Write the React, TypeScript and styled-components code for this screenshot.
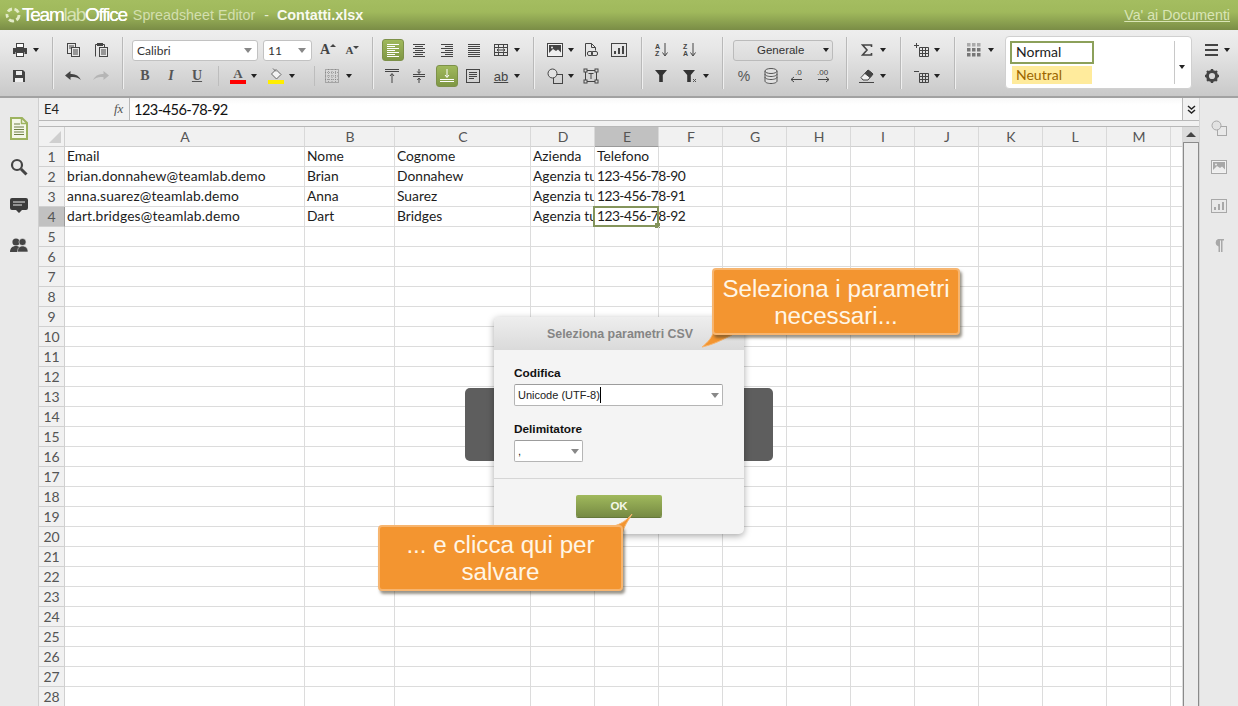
import React from 'react';
import styled, { createGlobalStyle } from 'styled-components';

const GlobalStyle = createGlobalStyle`
  html, body { margin: 0; padding: 0; width: 1238px; height: 706px; overflow: hidden; background: #fff; }
  * { box-sizing: border-box; }
`;

const CELL_FONT = `Lato, "Open Sans", sans-serif`;
const UI_FONT = `"Liberation Sans", Arial, sans-serif`;

const Page = styled.div`
  position: relative;
  width: 1238px;
  height: 706px;
  overflow: hidden;
  display: flex;
  flex-direction: column;
  font-family: ${UI_FONT};
`;

/* title bar */
const TitleBar = styled.div`
  height: 30px;
  flex: none;
  display: flex;
  align-items: center;
  padding: 0 8px 0 5px;
  background: linear-gradient(#a4bd60, #a0b95c 40%, #7a8d46);
`;

const Brand = styled.div`
  margin-left: 1px;
  font-size: 19px;
  letter-spacing: -1.25px;
  color: #fff;
  text-shadow: 0 0 0.5px #fff;
`;

const BrandLight = styled.span`
  color: #d6e2b2;
  text-shadow: none;
`;

const AppName = styled.div`
  margin-left: 6px;
  font-size: 14.3px;
  color: #d3dfae;
`;

const Dash = styled.div`
  margin: 0 8px 0 9px;
  font-size: 14px;
  color: #e6edcf;
`;

const FileName = styled.div`
  font-size: 14.4px;
  font-weight: 700;
  color: #f8faf0;
`;

const DocsLink = styled.a`
  margin-left: auto;
  font-size: 14.2px;
  color: #d9e5b6;
  text-decoration: underline;
`;

/* toolbar */
const Toolbar = styled.div`
  height: 68px;
  flex: none;
  display: flex;
  padding-top: 7px;
  background: linear-gradient(#eeeeee, #e6e6e6 30%, #c9c9c9);
  border-bottom: 2px solid #a2a2a2;
`;

const Group = styled.div<{ $w: number; $pad: number; $plain?: boolean }>`
  width: ${(p) => p.$w}px;
  height: 52px;
  flex: none;
  padding-left: ${(p) => p.$pad}px;
  border-right: ${(p) => (p.$plain ? 'none' : '1px solid #b9b9b9')};
  box-shadow: ${(p) => (p.$plain ? 'none' : '1px 0 0 #efefef')};
`;

const Row = styled.div`
  height: 26px;
  display: flex;
  align-items: center;
`;

const Slot = styled.div<{ $w: number }>`
  width: ${(p) => p.$w}px;
  height: 24px;
  flex: none;
  display: flex;
  align-items: center;
  justify-content: center;
  color: #444;
`;

const Gap = styled.div<{ $w: number }>`
  width: ${(p) => p.$w}px;
  flex: none;
`;

const ActiveButton = styled.div`
  width: 22px;
  height: 22px;
  flex: none;
  display: flex;
  align-items: center;
  justify-content: center;
  color: #fff;
  border: 1px solid #7d9149;
  border-radius: 3px;
  background: linear-gradient(#a0b95c, #7f9745);
`;

const Arrow = styled.i<{ $color?: string }>`
  display: block;
  width: 0;
  height: 0;
  border-left: 3.5px solid transparent;
  border-right: 3.5px solid transparent;
  border-top: 4px solid ${(p) => p.$color || '#222'};
`;

const Combo = styled.div<{ $w: number; $center?: boolean }>`
  width: ${(p) => p.$w}px;
  height: 21px;
  flex: none;
  display: flex;
  align-items: center;
  padding: 0 5px 0 4px;
  font-family: ${CELL_FONT};
  font-size: 12px;
  color: #333;
  background: #fff;
  border: 1px solid #c2c2c2;
  border-radius: 3px;
  justify-content: space-between;
`;

const FormatCombo = styled(Combo)`
  background: linear-gradient(#e6e6e6, #dcdcdc);
  border-color: #bbb;
  padding: 0 3px 0 23px;
  font-size: 11.5px;
  font-family: ${UI_FONT};
`;

const FontText = styled.span`
  font-family: ${CELL_FONT};
`;

const GreyArrow = styled(Arrow)`
  border-top-color: #888;
  border-left-width: 4px;
  border-right-width: 4px;
  border-top-width: 5px;
`;

const Sep = styled.div<{ $ml: number; $mr: number }>`
  width: 1px;
  height: 20px;
  flex: none;
  margin-left: ${(p) => p.$ml}px;
  margin-right: ${(p) => p.$mr}px;
  background: #bdbdbd;
`;

const SizeGlyph = styled.span<{ $big?: boolean }>`
  position: relative;
  font-family: "Liberation Serif", serif;
  font-weight: 700;
  font-size: ${(p) => (p.$big ? 14 : 11)}px;
  color: #444;
  padding-right: 6px;

  &::after {
    content: '';
    position: absolute;
    right: 0;
    top: 2px;
    border-left: 3px solid transparent;
    border-right: 3px solid transparent;
    ${(p) => (p.$big ? 'border-bottom: 3px solid #444;' : 'border-top: 3px solid #444;')}
  }
`;

const StyleGlyph = styled.span<{ $italic?: boolean; $under?: boolean }>`
  font-family: "Liberation Serif", serif;
  font-weight: 700;
  font-size: 14px;
  color: #555;
  font-style: ${(p) => (p.$italic ? 'italic' : 'normal')};
  text-decoration: ${(p) => (p.$under ? 'underline' : 'none')};
`;

const ColorGlyph = styled.div<{ $bar: string }>`
  width: 16px;
  display: flex;
  flex-direction: column;
  align-items: center;
  font-family: "Liberation Serif", serif;
  font-weight: 700;
  font-size: 13px;
  line-height: 12px;
  color: #555;

  &::after {
    content: '';
    display: block;
    width: 16px;
    height: 4px;
    background: ${(p) => p.$bar};
  }
`;

const AbGlyph = styled.span`
  font-family: ${UI_FONT};
  font-size: 13px;
  color: #444;
  text-decoration: underline;
`;

const Percent = styled.span`
  font-family: ${UI_FONT};
  font-size: 14px;
  color: #555;
`;

const Gallery = styled.div`
  width: 187px;
  height: 53px;
  flex: none;
  margin-top: -1px;
  display: flex;
  background: #fff;
  border: 1px solid #d0d0d0;
  border-radius: 4px;
  padding: 4px 0 0 4px;
`;

const GalleryItems = styled.div`
  width: 165px;
  height: 43px;
  flex: none;
  border-right: 1px solid #c8c8c8;
`;

const NormalStyle = styled.div`
  width: 84px;
  height: 23px;
  display: flex;
  align-items: center;
  padding: 0 0 2px 4px;
  font-family: ${CELL_FONT};
  font-size: 14px;
  color: #222;
  border: 2.5px solid #8ca05a;
`;

const NeutralStyle = styled.div`
  width: 80px;
  height: 18px;
  margin: 2px 0 0 2px;
  padding: 0 0 2px 4px;
  display: flex;
  align-items: center;
  font-family: ${CELL_FONT};
  font-size: 14px;
  color: #9c6500;
  background: #ffeb9c;
`;

const GalleryMore = styled.div`
  flex: 1;
  display: flex;
  align-items: center;
  justify-content: center;
  padding-right: 2px;
  padding-top: 4px;
`;

/* main area */
const Main = styled.div`
  flex: 1;
  min-height: 0;
  display: flex;
`;

const LeftRail = styled.div`
  width: 39px;
  flex: none;
  display: flex;
  flex-direction: column;
  align-items: center;
  padding-top: 19px;
  gap: 17px;
  background: #e9e9e9;
  border-right: 1px solid #cfcfcf;
`;

const RailIcon = styled.div`
  width: 22px;
  height: 22px;
  display: flex;
  align-items: center;
  justify-content: center;
`;

const RightRail = styled.div`
  width: 39px;
  flex: none;
  display: flex;
  flex-direction: column;
  align-items: center;
  padding-top: 19px;
  gap: 17px;
  background: #e9e9e9;
  border-left: 1px solid #d4d4d4;
`;

const Center = styled.div`
  flex: 1;
  min-width: 0;
  display: flex;
  flex-direction: column;
`;

const FormulaBar = styled.div`
  height: 23px;
  flex: none;
  display: flex;
  background: #f1f1f1;
  border-bottom: 1px solid #b8b8b8;
`;

const NameBox = styled.div`
  width: 75px;
  padding-left: 5px;
  display: flex;
  align-items: center;
  font-family: ${CELL_FONT};
  font-size: 13px;
  color: #222;
`;

const FxLabel = styled.div`
  width: 15px;
  display: flex;
  align-items: center;
  font-family: "Liberation Serif", serif;
  font-style: italic;
  font-size: 13px;
  color: #555;
`;

const FormulaInput = styled.div`
  flex: 1;
  padding-left: 4px;
  display: flex;
  align-items: center;
  font-family: ${CELL_FONT};
  font-size: 14.6px;
  letter-spacing: -0.55px;
  color: #111;
  background: linear-gradient(#f8f8f8, #fff 30%);
  border-left: 1px solid #b8b8b8;
  border-right: 1px solid #b8b8b8;
`;

const ExpandButton = styled.div`
  width: 16px;
  display: flex;
  align-items: center;
  justify-content: center;
`;

const Strip = styled.div`
  height: 6px;
  flex: none;
  background: #f1f1f1;
  border-bottom: 1px solid #b8b8b8;
`;

const SheetArea = styled.div`
  flex: 1;
  min-height: 0;
  display: flex;
`;

const Sheet = styled.div`
  flex: 1;
  min-width: 0;
  overflow: hidden;
`;

const SheetRow = styled.div`
  height: 20px;
  display: flex;
`;

const Corner = styled.div`
  width: 26px;
  height: 20px;
  flex: none;
  background: #f1f1f1;
  border-right: 1px solid #d0d0d0;
  border-bottom: 1px solid #d0d0d0;
  display: flex;
  align-items: flex-end;
  justify-content: flex-end;
  padding: 0 3px 3px 0;
`;

const CornerMark = styled.i`
  display: block;
  width: 0;
  height: 0;
  border-left: 12px solid transparent;
  border-bottom: 12px solid #cfcfcf;
`;

const ColHead = styled.div<{ $w: number; $active?: boolean }>`
  width: ${(p) => p.$w}px;
  flex: none;
  display: flex;
  align-items: center;
  justify-content: center;
  padding-left: 1px;
  font-family: ${CELL_FONT};
  font-size: 14px;
  color: #555;
  background: ${(p) => (p.$active ? '#c1c1c1' : '#f1f1f1')};
  border-right: 1px solid #d9d9d9;
  border-bottom: 1px solid ${(p) => (p.$active ? '#9a9a9a' : '#d0d0d0')};
`;

const RowHead = styled.div<{ $active?: boolean }>`
  width: 26px;
  flex: none;
  display: flex;
  align-items: center;
  justify-content: center;
  padding-bottom: 1px;
  font-family: ${CELL_FONT};
  font-size: 14px;
  color: #555;
  background: ${(p) => (p.$active ? '#c1c1c1' : '#f1f1f1')};
  border-right: 1px solid ${(p) => (p.$active ? '#9a9a9a' : '#d0d0d0')};
  border-bottom: 1px solid #d0d0d0;
`;

const Cell = styled.div<{ $w: number; $clip?: boolean; $track: number }>`
  position: relative;
  width: ${(p) => p.$w}px;
  flex: none;
  padding-left: 2px;
  white-space: nowrap;
  overflow: ${(p) => (p.$clip ? 'hidden' : 'visible')};
  font-family: ${CELL_FONT};
  font-size: 13.8px;
  letter-spacing: ${(p) => p.$track}px;
  line-height: 18px;
  color: #1c1c1c;
  border-right: 1px solid #dcdcdc;
  border-bottom: 1px solid #dcdcdc;
`;

const Selection = styled.div`
  position: absolute;
  left: -2px;
  top: -1px;
  width: 66px;
  height: 21px;
  border: 2px solid #84945b;

  &::after {
    content: '';
    position: absolute;
    right: -3px;
    bottom: -3px;
    width: 5px;
    height: 5px;
    background: #84945b;
  }
`;

const Scrollbar = styled.div`
  width: 16px;
  flex: none;
  display: flex;
  flex-direction: column;
  background: #ececec;
`;

const ScrollUp = styled.div`
  height: 15px;
  flex: none;
  display: flex;
  align-items: center;
  justify-content: center;
  background: #dcdcdc;
`;

const UpArrow = styled.i`
  display: block;
  width: 0;
  height: 0;
  border-left: 5px solid transparent;
  border-right: 5px solid transparent;
  border-bottom: 5px solid #444;
`;

const ScrollThumb = styled.div`
  flex: 1;
  background: #ececec;
  border: 1px solid #8a8a8a;
  border-bottom: none;
  border-radius: 1px 1px 0 0;
`;

/* dialog and callouts lie over the sheet */
const LoadingBox = styled.div`
  position: absolute;
  left: 465px;
  top: 388px;
  width: 308px;
  height: 73px;
  background: #5e5e5e;
  border-radius: 5px;
`;

const Dialog = styled.div`
  position: absolute;
  left: 494px;
  top: 317px;
  width: 250px;
  height: 217px;
  display: flex;
  flex-direction: column;
  background: #f4f4f4;
  border-radius: 5px;
  box-shadow: 0 2px 7px rgba(0, 0, 0, 0.35);
`;

const DialogTitle = styled.div`
  height: 33px;
  flex: none;
  display: flex;
  align-items: center;
  justify-content: center;
  padding-left: 2px;
  font-size: 12.4px;
  font-weight: 700;
  color: #858585;
  background: linear-gradient(#eeeeee, #dadada);
  border-radius: 5px 5px 0 0;
`;

const DialogBody = styled.div`
  flex: 1;
  padding: 16px 20px 0;
  border-bottom: 1px solid #d6d6d6;
`;

const FieldLabel = styled.div`
  height: 18px;
  font-size: 11.8px;
  font-weight: 700;
  line-height: 15px;
  color: #111;
`;

const DialogSelect = styled.div<{ $w: number }>`
  width: ${(p) => p.$w}px;
  height: 22px;
  margin-bottom: 16px;
  display: flex;
  align-items: center;
  padding-left: 3px;
  font-size: 11px;
  color: #222;
  background: #fff;
  border: 1px solid #b5b5b5;
  border-top-color: #9c9c9c;
  border-radius: 2px;
`;

const TextCaret = styled.i`
  display: block;
  width: 1px;
  height: 16px;
  background: #000;
`;

const SelectArrow = styled.div`
  width: 15px;
  margin-left: auto;
  display: flex;
  justify-content: center;
  padding-left: 1px;
`;

const DialogFooter = styled.div`
  height: 56px;
  flex: none;
  display: flex;
  justify-content: center;
  padding: 16px 0 0 0;
`;

const OkButton = styled.div`
  width: 86px;
  height: 22px;
  display: flex;
  align-items: center;
  justify-content: center;
  font-size: 11.5px;
  font-weight: 700;
  color: #f4f7e8;
  background: linear-gradient(#a0b95c, #768a43);
  border-radius: 2px;
  box-shadow: 0 1px 0 #65783a;
`;

const Callout = styled.div`
  position: absolute;
  display: flex;
  align-items: center;
  justify-content: center;
  text-align: center;
  font-size: 24.2px;
  line-height: 27px;
  color: #fff6e6;
  background: #f39530;
  border: 2px solid #f7b56f;
  border-radius: 4px;
  box-shadow: 2px 3px 3px rgba(70, 60, 40, 0.55);
`;

const TopCallout = styled(Callout)`
  left: 712px;
  top: 268px;
  width: 248px;
  height: 67px;
`;

const BottomCallout = styled(Callout)`
  left: 378px;
  top: 525px;
  width: 245px;
  height: 66px;
`;

const Tail = styled.svg`
  position: absolute;
  overflow: visible;
`;

const TopTail = styled(Tail)`
  left: 698px;
  top: 312px;
  width: 36px;
  height: 38px;
`;

const BottomTail = styled(Tail)`
  left: 606px;
  top: 512px;
  width: 30px;
  height: 34px;
`;

/* icons */
const Svg = ({ w = 16, h = 16, children }: { w?: number; h?: number; children: React.ReactNode }) => (
  <svg width={w} height={h} viewBox={`0 0 ${w} ${h}`} fill="none" stroke="currentColor" strokeWidth="1">
    {children}
  </svg>
);

const Lines = ({ rows }: { rows: [number, number, number][] }) => (
  <Svg>
    {rows.map(([a, b, y], i) => (
      <path key={i} d={`M${a} ${y}.5H${b}`} />
    ))}
  </Svg>
);

const AlignLeft = () => <Lines rows={[[2, 14, 2], [2, 10, 4], [2, 14, 6], [2, 10, 8], [2, 14, 10], [2, 10, 12], [2, 14, 14]]} />;
const AlignCenter = () => <Lines rows={[[2, 14, 2], [4, 12, 4], [2, 14, 6], [4, 12, 8], [2, 14, 10], [4, 12, 12], [2, 14, 14]]} />;
const AlignRight = () => <Lines rows={[[2, 14, 2], [6, 14, 4], [2, 14, 6], [6, 14, 8], [2, 14, 10], [6, 14, 12], [2, 14, 14]]} />;
const AlignJustify = () => <Lines rows={[[2, 14, 2], [2, 14, 4], [2, 14, 6], [2, 14, 8], [2, 14, 10], [2, 14, 12], [2, 14, 14]]} />;

const Merge = () => (
  <Svg>
    <rect x="1.5" y="2.5" width="13" height="11" />
    <path d="M1 5.5h14M1 10.5h14M5.5 3v2M10.5 3v2M5.5 11v2M10.5 11v2M4 8h8M4 8l2-1.5M4 8l2 1.5M12 8l-2-1.5M12 8l-2 1.5" />
  </Svg>
);

const Printer = () => (
  <Svg>
    <rect x="4.5" y="1.5" width="7" height="4" fill="#fff" />
    <path d="M1 6h14v6h-2.500v-2h-9v2H1z" fill="currentColor" stroke="none" />
    <rect x="4.5" y="10.5" width="7" height="4" fill="#fff" />
  </Svg>
);

const Floppy = () => (
  <Svg>
    <path d="M2 2h10l2 2v10H2z" fill="currentColor" stroke="none" />
    <rect x="5" y="3" width="6" height="4" fill="#eee" stroke="none" />
    <rect x="4" y="10" width="8" height="4" fill="#eee" stroke="none" />
  </Svg>
);

const Copy = () => (
  <Svg>
    <rect x="2.5" y="1.5" width="8" height="10" fill="#e8e8e8" />
    <rect x="6.5" y="5.5" width="8" height="9" fill="#e8e8e8" />
    <path d="M8 8h5M8 10h5M8 12h5M4 4h5M4 6h2" />
  </Svg>
);

const Paste = () => (
  <Svg>
    <path d="M2.5 14.5v-12h9v3" />
    <rect x="4" y="1" width="6" height="3" fill="currentColor" stroke="none" />
    <rect x="6.5" y="5.5" width="8" height="9" fill="#e8e8e8" />
    <path d="M8 8h5M8 10h5M8 12h5" />
  </Svg>
);

const Undo = ({ mirror, color }: { mirror?: boolean; color: string }) => (
  <svg width="16" height="10" viewBox="0 0 16 10">
    <path
      transform={mirror ? 'translate(16 0) scale(-1 1)' : undefined}
      d="M0 4.500L5.500 0v3C10 2.500 14 4.500 16 9 13 6.500 9.500 5.500 5.500 6.300V9z"
      fill={color}
    />
  </svg>
);

const Borders = () => (
  <svg width="14" height="14" viewBox="0 0 14 14" fill="none" stroke="#777" strokeDasharray="1 1">
    <rect x="0.5" y="0.5" width="13" height="13" />
    <path d="M7 0v14M0 7h14M3.500 0v14M10.500 0v14M0 3.500h14M0 10.500h14" opacity="0.6" />
  </svg>
);

const Bucket = () => (
  <svg width="16" height="16" viewBox="0 0 16 16" fill="none">
    <path d="M8 1.500l5 5-4.500 4.500-5-5z" stroke="#666" fill="#f2f2f2" />
    <path d="M5 0.500L8 3.500" stroke="#666" />
    <rect x="0" y="12" width="16" height="4" fill="#ffee00" />
  </svg>
);

const ValignTop = () => (
  <Svg>
    <path d="M1 1.500h14M1 3.500h14M8 15V6M6 8l2-2.500L10 8" />
  </Svg>
);

const ValignMid = () => (
  <Svg>
    <path d="M2 6.500h12M2 8.500h12M8 1v4M6.300 3.500L8 5.500l1.700-2M8 15v-5M6.300 12L8 10l1.700 2" />
  </Svg>
);

const ValignBottom = () => (
  <Svg>
    <path d="M1 11.500h14M1 13.500h14M8 1v8M6 7l2 2.500L10 7" />
  </Svg>
);

const WrapText = () => (
  <Svg>
    <rect x="1.5" y="1.5" width="13" height="13" />
    <path d="M4 4.500h8M4 6.500h8M4 8.500h8M4 10.500h5" />
  </Svg>
);

const ImageIcon = ({ color = '#444' }: { color?: string }) => (
  <svg width="16" height="14" viewBox="0 0 16 14" fill="none">
    <rect x="0.5" y="0.5" width="15" height="13" stroke={color} fill="#f2f2f2" />
    <rect x="2" y="2" width="12" height="10" fill={color} />
    <path d="M2 10l4-4 3 2 2-1.500 3 3V12H2z" fill="#eee" />
    <circle cx="5" cy="4.500" r="1" fill="#eee" />
  </svg>
);

const DocLink = () => (
  <Svg>
    <path d="M2.500 14.500v-13h6l4 4v3" />
    <path d="M8.500 1.500v4h4" />
    <rect x="4.500" y="9.500" width="5" height="4" rx="1.500" />
    <rect x="8.500" y="9.500" width="6" height="4" rx="1.500" />
  </Svg>
);

const Chart = ({ color = '#444' }: { color?: string }) => (
  <svg width="16" height="14" viewBox="0 0 16 14" fill="none">
    <rect x="0.5" y="0.5" width="15" height="13" stroke={color} />
    <path d="M3 8h2v3H3zM7 5h2v6H7zM11 3h2v8h-2z" fill={color} />
  </svg>
);

const Shapes = ({ color = '#444' }: { color?: string }) => (
  <svg width="16" height="16" viewBox="0 0 16 16" fill="none" stroke={color}>
    <rect x="6.500" y="6.500" width="9" height="9" />
    <circle cx="5.500" cy="5.500" r="4.500" fill="#e2e2e2" />
  </svg>
);

const TextBox = () => (
  <Svg>
    <rect x="2.500" y="2.500" width="11" height="11" />
    <rect x="1" y="1" width="3" height="3" fill="#ddd" />
    <rect x="12" y="1" width="3" height="3" fill="#ddd" />
    <rect x="1" y="12" width="3" height="3" fill="#ddd" />
    <rect x="12" y="12" width="3" height="3" fill="#ddd" />
    <path d="M5.500 5.500h5M8 5.500v5.500" />
  </Svg>
);

const Sort = ({ top, bottom }: { top: string; bottom: string }) => (
  <svg width="16" height="16" viewBox="0 0 16 16" fill="none">
    <text x="1" y="7" fontSize="7" fontWeight="700" fontFamily="Liberation Sans" fill="#444">{top}</text>
    <text x="1" y="14" fontSize="7" fontWeight="700" fontFamily="Liberation Sans" fill="#444">{bottom}</text>
    <path d="M11 1v12M8.500 10.500L11 14l2.500-3.500" stroke="#444" />
  </svg>
);

const Filter = ({ clear }: { clear?: boolean }) => (
  <svg width="16" height="14" viewBox="0 0 16 14">
    <path d="M1 1h12L8.800 6v7H5.200V6z" fill="#333" />
    {clear && <path d="M11 10l3 3M14 10l-3 3" stroke="#555" fill="none" />}
  </svg>
);

const Database = () => (
  <svg width="14" height="16" viewBox="0 0 14 16" fill="#e0e0e0" stroke="#555">
    <path d="M1 3v10c0 1.500 2.700 2.500 6 2.500s6-1 6-2.500V3" />
    <ellipse cx="7" cy="3" rx="6" ry="2.500" />
    <path d="M1 6c0 1.500 2.700 2.500 6 2.500S13 7.500 13 6M1 9c0 1.500 2.700 2.500 6 2.500S13 10.500 13 9" fill="none" />
  </svg>
);

const Decimal = ({ left, label }: { left?: boolean; label: string }) => (
  <svg width="14" height="16" viewBox="0 0 14 16" fill="none">
    <text x={left ? 5 : 0} y="7" fontSize="8" fontFamily="Liberation Sans" fill="#444">{label}</text>
    <path d={left ? 'M12 11.500H1M4 9L1 11.500 4 14' : 'M1 11.500h11M9 9l3 2.500L9 14'} stroke="#444" />
  </svg>
);

const Sigma = () => (
  <svg width="12" height="12" viewBox="0 0 12 12" fill="none" stroke="#444" strokeWidth="1.600">
    <path d="M10.500 3V1H1.500L6 6l-4.500 5h9V9" />
  </svg>
);

const Eraser = () => (
  <svg width="16" height="14" viewBox="0 0 16 14" fill="none" stroke="#444">
    <path d="M9 1l5 4-5 6H4L2 8.500z" fill="#f2f2f2" />
    <path d="M9 1l5 4-3 3.500-5-4z" fill="#444" />
    <path d="M0 13.500h15" />
  </svg>
);

const TableEdit = ({ sign }: { sign: string }) => (
  <svg width="16" height="14" viewBox="0 0 16 14" fill="none" stroke="#444">
    <path d={sign} />
    <path d="M5.500 4.500h9v9h-9zM8.500 4v10M11.500 4v10M5 7.500h10M5 10.500h10" />
  </svg>
);

const Dots = () => (
  <svg width="14" height="14" viewBox="0 0 14 14" fill="#777">
    {[0, 5, 10].map((y) =>
      [0, 5, 10].map((x) => (
        <rect key={`${x}-${y}`} x={x} y={y} width="3.500" height="3.500" opacity={y === 0 ? 0.55 : 1} />
      ))
    )}
  </svg>
);

const Menu = () => (
  <svg width="13" height="12" viewBox="0 0 13 12" fill="#444">
    <rect y="0" width="13" height="2" />
    <rect y="5" width="13" height="2" />
    <rect y="10" width="13" height="2" />
  </svg>
);

const Gear = () => (
  <svg width="14" height="14" viewBox="0 0 14 14">
    <circle cx="7" cy="7" r="4.600" fill="none" stroke="#444" strokeWidth="3" />
    <path d="M7 0v14M0 7h14M2 2l10 10M12 2L2 12" stroke="#444" strokeWidth="2.400" strokeDasharray="2.400 9.200" />
  </svg>
);

const Logo = () => (
  <svg width="16" height="16" viewBox="0 0 16 16" fill="none" stroke="#e3ebc8" strokeWidth="2.800">
    <path d="M3 4.500A6 6 0 0 1 7 2M9.500 2.200A6 6 0 0 1 13.400 5.500M14 8a6 6 0 0 1-2.600 5M9 13.900A6 6 0 0 1 4 12.500M2.700 10.500A6 6 0 0 1 2 7" />
  </svg>
);

const DocRail = () => (
  <svg width="18" height="23" viewBox="0 0 18 23" fill="none">
    <path d="M1 1h11l5 5v16H1z" fill="#f4f7e8" stroke="#9db35f" strokeWidth="2" />
    <path d="M11.500 1v5.500H17" stroke="#9db35f" strokeWidth="1.500" />
    <path d="M4 7h6M4 10h10M4 12.500h10M4 15h10M4 17.500h10" stroke="#6f7f45" />
  </svg>
);

const SearchRail = () => (
  <svg width="18" height="18" viewBox="0 0 18 18" fill="none" stroke="#444">
    <circle cx="7" cy="7" r="5" strokeWidth="2.200" />
    <path d="M11 11l5.500 5.500" strokeWidth="3" />
  </svg>
);

const ChatRail = () => (
  <svg width="18" height="16" viewBox="0 0 18 16">
    <path d="M2 0h14a2 2 0 0 1 2 2v8a2 2 0 0 1-2 2h-4l-3 3-3-3H2a2 2 0 0 1-2-2V2a2 2 0 0 1 2-2z" fill="#3c3c3c" />
    <path d="M3 4h12M3 7h9" stroke="#e9e9e9" fill="none" />
  </svg>
);

const PeopleRail = () => (
  <svg width="18" height="14" viewBox="0 0 18 14" fill="#444">
    <circle cx="6" cy="4" r="3.600" />
    <path d="M0 14c0-4 2.500-6 6-6s4.500 2 4.500 6z" />
    <circle cx="12.500" cy="4" r="3.600" stroke="#e9e9e9" strokeWidth="0.600" />
    <path d="M7.500 14c0-4 2-6 5-6s5.500 2 5.500 6z" stroke="#e9e9e9" strokeWidth="0.600" />
  </svg>
);

const Pilcrow = () => (
  <svg width="10" height="13" viewBox="0 0 10 13" fill="#a8a8a8">
    <path d="M4 0h6v1.500H8.500V13H7V1.500H6V13H4.500V7.500A4 4 0 0 1 4 0z" />
  </svg>
);

const Expand = () => (
  <svg width="9" height="9" viewBox="0 0 9 9" fill="none" stroke="#222" strokeWidth="1.500">
    <path d="M1 1l3.500 3L8 1M1 5l3.500 3L8 5" />
  </svg>
);

const COLUMNS: [string, number][] = [
  ['A', 240], ['B', 90], ['C', 136], ['D', 64], ['E', 64], ['F', 64], ['G', 64],
  ['H', 64], ['I', 64], ['J', 64], ['K', 64], ['L', 64], ['M', 64], ['', 12],
];

const DATA: string[][] = [
  ['Email', 'Nome', 'Cognome', 'Azienda', 'Telefono'],
  ['brian.donnahew@teamlab.demo', 'Brian', 'Donnahew', 'Agenzia turistica', '123-456-78-90'],
  ['anna.suarez@teamlab.demo', 'Anna', 'Suarez', 'Agenzia turistica', '123-456-78-91'],
  ['dart.bridges@teamlab.demo', 'Dart', 'Bridges', 'Agenzia turistica', '123-456-78-92'],
];

const ROWS = Array.from({ length: 28 }, (_, i) => i);

// Lato's digits and @ differ from Calibri's, so those values get their own tracking
const trackingFor = (value?: string) => {
  if (!value) return 0;
  if (/^\d/.test(value)) return -0.55;
  return value.includes('@') ? 0.15 : 0;
};

export default function App() {
  return (
    <Page>
      <GlobalStyle />
      <TitleBar>
        <Logo />
        <Brand>
          Team<BrandLight>lab</BrandLight>Office
        </Brand>
        <AppName>Spreadsheet Editor</AppName>
        <Dash>-</Dash>
        <FileName>Contatti.xlsx</FileName>
        <DocsLink>Va' ai Documenti</DocsLink>
      </TitleBar>

      <Toolbar>
        <Group $w={53} $pad={9}>
          <Row>
            <Slot $w={21}><Printer /></Slot>
            <Slot $w={11}><Arrow /></Slot>
          </Row>
          <Row>
            <Slot $w={20}><Floppy /></Slot>
          </Row>
        </Group>
        <Group $w={70} $pad={6}>
          <Row>
            <Slot $w={28}><Copy /></Slot>
            <Slot $w={28}><Paste /></Slot>
          </Row>
          <Row>
            <Slot $w={28}><Undo color="#444" /></Slot>
            <Slot $w={28}><Undo mirror color="#b5b5b5" /></Slot>
          </Row>
        </Group>
        <Group $w={250} $pad={9}>
          <Row>
            <Combo $w={126}>
              <FontText>Calibri</FontText>
              <GreyArrow />
            </Combo>
            <Gap $w={5} />
            <Combo $w={49}>
              <FontText>11</FontText>
              <GreyArrow />
            </Combo>
            <Slot $w={32}><SizeGlyph $big>A</SizeGlyph></Slot>
            <Slot $w={17}><SizeGlyph>A</SizeGlyph></Slot>
          </Row>
          <Row>
            <Slot $w={26}><StyleGlyph>B</StyleGlyph></Slot>
            <Slot $w={26}><StyleGlyph $italic>I</StyleGlyph></Slot>
            <Slot $w={26}><StyleGlyph $under>U</StyleGlyph></Slot>
            <Sep $ml={8} $mr={8} />
            <Slot $w={22}><ColorGlyph $bar="#ff0000">A</ColorGlyph></Slot>
            <Slot $w={10}><Arrow /></Slot>
            <Gap $w={6} />
            <Slot $w={22}><Bucket /></Slot>
            <Slot $w={10}><Arrow /></Slot>
            <Sep $ml={17} $mr={7} />
            <Slot $w={20}><Borders /></Slot>
            <Gap $w={2} />
            <Slot $w={10}><Arrow /></Slot>
          </Row>
        </Group>
        <Group $w={161} $pad={9}>
          <Row>
            <ActiveButton><AlignLeft /></ActiveButton>
            <Gap $w={1} />
            <Slot $w={28}><AlignCenter /></Slot>
            <Slot $w={27}><AlignRight /></Slot>
            <Slot $w={27}><AlignJustify /></Slot>
            <Slot $w={27}><Merge /></Slot>
            <Slot $w={6}><Arrow /></Slot>
          </Row>
          <Row>
            <Slot $w={20}><ValignTop /></Slot>
            <Slot $w={34}><ValignMid /></Slot>
            <ActiveButton><ValignBottom /></ActiveButton>
            <Slot $w={30}><WrapText /></Slot>
            <Slot $w={26}><AbGlyph>ab</AbGlyph></Slot>
            <Slot $w={6}><Arrow /></Slot>
          </Row>
        </Group>
        <Group $w={108} $pad={10}>
          <Row>
            <Slot $w={22}><ImageIcon /></Slot>
            <Slot $w={10}><Arrow /></Slot>
            <Slot $w={30}><DocLink /></Slot>
            <Slot $w={26}><Chart /></Slot>
          </Row>
          <Row>
            <Slot $w={22}><Shapes /></Slot>
            <Slot $w={10}><Arrow /></Slot>
            <Slot $w={30}><TextBox /></Slot>
          </Row>
        </Group>
        <Group $w={81} $pad={6}>
          <Row>
            <Slot $w={28}><Sort top="A" bottom="Z" /></Slot>
            <Slot $w={27}><Sort top="Z" bottom="A" /></Slot>
          </Row>
          <Row>
            <Slot $w={28}><Filter /></Slot>
            <Slot $w={27}><Filter clear /></Slot>
            <Slot $w={6}><Arrow /></Slot>
          </Row>
        </Group>
        <Group $w={124} $pad={10}>
          <Row>
            <FormatCombo $w={100}>
              <span>Generale</span>
              <Arrow />
            </FormatCombo>
          </Row>
          <Row>
            <Slot $w={22}><Percent>%</Percent></Slot>
            <Slot $w={32}><Database /></Slot>
            <Slot $w={20}><Decimal left label=".0" /></Slot>
            <Slot $w={34}><Decimal label=".00" /></Slot>
          </Row>
        </Group>
        <Group $w={54} $pad={8}>
          <Row>
            <Slot $w={23}><Sigma /></Slot>
            <Slot $w={10}><Arrow /></Slot>
          </Row>
          <Row>
            <Slot $w={23}><Eraser /></Slot>
            <Slot $w={10}><Arrow /></Slot>
          </Row>
        </Group>
        <Group $w={54} $pad={8}>
          <Row>
            <Slot $w={25}><TableEdit sign="M0 2.500h5M2.500 0v5" /></Slot>
            <Slot $w={6}><Arrow /></Slot>
          </Row>
          <Row>
            <Slot $w={25}><TableEdit sign="M0 2.500h5" /></Slot>
            <Slot $w={6}><Arrow /></Slot>
          </Row>
        </Group>
        <Group $w={50} $pad={8} $plain>
          <Row>
            <Slot $w={22}><Dots /></Slot>
            <Slot $w={12}><Arrow /></Slot>
          </Row>
        </Group>
        <Gallery>
          <GalleryItems>
            <NormalStyle>Normal</NormalStyle>
            <NeutralStyle>Neutral</NeutralStyle>
          </GalleryItems>
          <GalleryMore><Arrow /></GalleryMore>
        </Gallery>
        <Group $w={46} $pad={8} $plain>
          <Row>
            <Slot $w={23}><Menu /></Slot>
            <Slot $w={8}><Arrow /></Slot>
          </Row>
          <Row>
            <Slot $w={23}><Gear /></Slot>
          </Row>
        </Group>
      </Toolbar>

      <Main>
        <LeftRail>
          <RailIcon><DocRail /></RailIcon>
          <RailIcon><SearchRail /></RailIcon>
          <RailIcon><ChatRail /></RailIcon>
          <RailIcon><PeopleRail /></RailIcon>
        </LeftRail>
        <Center>
          <FormulaBar>
            <NameBox>E4</NameBox>
            <FxLabel>fx</FxLabel>
            <FormulaInput>123-456-78-92</FormulaInput>
            <ExpandButton><Expand /></ExpandButton>
          </FormulaBar>
          <Strip />
          <SheetArea>
            <Sheet>
              <SheetRow>
                <Corner><CornerMark /></Corner>
                {COLUMNS.map(([name, w]) => (
                  <ColHead key={name} $w={w} $active={name === 'E'}>{name}</ColHead>
                ))}
              </SheetRow>
              {ROWS.map((r) => (
                <SheetRow key={r}>
                  <RowHead $active={r === 3}>{r + 1}</RowHead>
                  {COLUMNS.map(([name, w], c) => (
                    <Cell key={name} $w={w} $clip={c === 3} $track={trackingFor(DATA[r]?.[c])}>
                      {DATA[r]?.[c]}
                      {r === 3 && c === 4 && <Selection />}
                    </Cell>
                  ))}
                </SheetRow>
              ))}
            </Sheet>
            <Scrollbar>
              <ScrollUp><UpArrow /></ScrollUp>
              <ScrollThumb />
            </Scrollbar>
          </SheetArea>
        </Center>
        <RightRail>
          <RailIcon><Shapes color="#a8a8a8" /></RailIcon>
          <RailIcon><ImageIcon color="#a8a8a8" /></RailIcon>
          <RailIcon><Chart color="#a8a8a8" /></RailIcon>
          <RailIcon><Pilcrow /></RailIcon>
        </RightRail>
      </Main>

      <LoadingBox />
      <Dialog>
        <DialogTitle>Seleziona parametri CSV</DialogTitle>
        <DialogBody>
          <FieldLabel>Codifica</FieldLabel>
          <DialogSelect $w={209}>
            Unicode (UTF-8)
            <TextCaret />
            <SelectArrow><GreyArrow /></SelectArrow>
          </DialogSelect>
          <FieldLabel>Delimitatore</FieldLabel>
          <DialogSelect $w={69}>
            ,
            <SelectArrow><GreyArrow /></SelectArrow>
          </DialogSelect>
        </DialogBody>
        <DialogFooter>
          <OkButton>OK</OkButton>
        </DialogFooter>
      </Dialog>

      <TopTail viewBox="0 0 36 38">
        <path d="M16 2v16C14 26 10 30 4 35 14 33 24 28 34 23z" fill="#f39530" stroke="#f7b56f" />
      </TopTail>
      <TopCallout>
        Seleziona i parametri
        <br />
        necessari...
      </TopCallout>
      <BottomTail viewBox="0 0 30 34">
        <path d="M7 14C14 13 21 8 26 2 22 9 18 14 16 22V30H7z" fill="#f39530" stroke="#f7b56f" />
      </BottomTail>
      <BottomCallout>
        ... e clicca qui per
        <br />
        salvare
      </BottomCallout>
    </Page>
  );
}
